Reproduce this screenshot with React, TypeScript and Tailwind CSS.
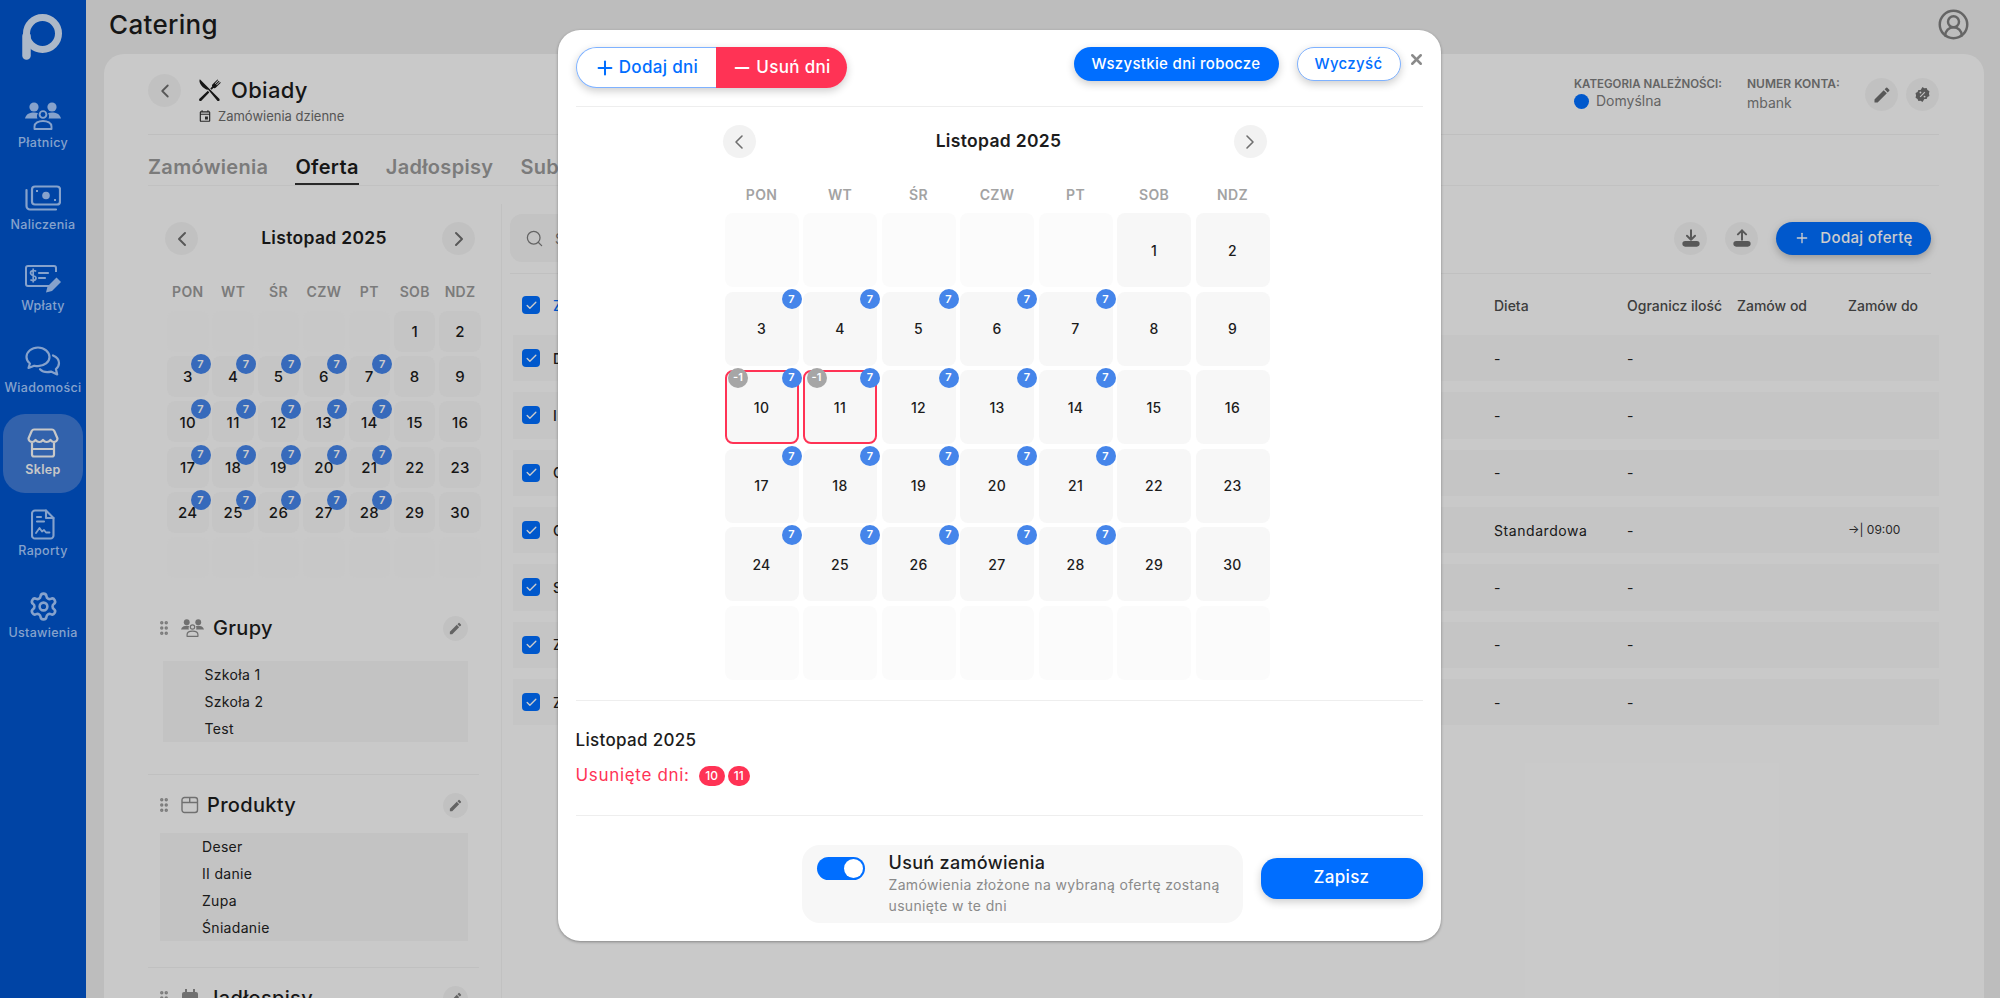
import { ChevronLeft, ChevronRight, CircleUserRound, GripVertical, Minus, Plus, Search, Settings, Check, X } from 'lucide-react';
import { GiKnifeFork } from 'react-icons/gi';
import { MdEdit, MdOutlineEvent } from 'react-icons/md';
import type { ReactNode } from 'react';

function PeopleIcon({ className }: { className?: string }) {
  return (
    <svg viewBox="0 0 36 28" className={className} fill="currentColor">
      <circle cx="9" cy="5" r="4.6" />
      <circle cx="27" cy="5" r="4.6" />
      <path d="M0 16.500C1 12 5 10.500 9 10.500c1.700 0 3 .3 4 .8-1.300 1.500-1.400 3.500-.5 5.200H0Z" />
      <path d="M36 16.500C35 12 31 10.500 27 10.500c-1.700 0-3 .3-4 .8 1.300 1.500 1.400 3.500.5 5.200H36Z" />
      <circle cx="18" cy="12.500" r="3.400" fill="none" stroke="currentColor" strokeWidth="1.900" />
      <path d="M9.500 27v-2.500c0-3.500 4-5.500 8.500-5.500s8.500 2 8.500 5.500V27H9.500Z" fill="none" stroke="currentColor" strokeWidth="1.900" strokeLinejoin="round" />
    </svg>
  );
}

function CashIcon({ className }: { className?: string }) {
  return (
    <svg viewBox="0 0 36 26" className={className} fill="none" stroke="currentColor" strokeWidth="2.200">
      <rect x="7" y="1.500" width="28" height="18" rx="3" />
      <circle cx="21" cy="10.500" r="3.800" fill="currentColor" stroke="none" />
      <path d="M11 6h2M29 15h2" strokeWidth="2" />
      <path d="M1.500 5v16a3.500 3.500 0 0 0 3.500 3.500h26" strokeLinecap="round" />
    </svg>
  );
}

function PaymentIcon({ className }: { className?: string }) {
  return (
    <svg viewBox="0 0 36 28" className={className} fill="none" stroke="currentColor" strokeWidth="2">
      <path d="M27 21H3a2 2 0 0 1-2-2V3a2 2 0 0 1 2-2h26a2 2 0 0 1 2 2v4" />
      <path d="M14 8h9M14 13h6" strokeLinecap="round" strokeWidth="2.200" />
      <path d="M11 6.500C10 5 5.500 5 5.500 8c0 3 5.500 2 5.500 5 0 3-4.500 3-5.500 1.500M8.200 3.500v14" strokeWidth="1.700" />
      <path d="M21 27.500l1.500-6 9-9 4.500 4.500-9 9-6 1.500Z" fill="currentColor" stroke="none" />
    </svg>
  );
}

function ChatIcon({ className }: { className?: string }) {
  return (
    <svg viewBox="0 0 36 30" className={className} fill="none" stroke="currentColor" strokeWidth="2.200" strokeLinejoin="round" strokeLinecap="round">
      <path d="M13 1.500C6.700 1.500 1.500 5.700 1.500 11c0 2.600 1.300 4.900 3.400 6.500L3.500 22l5.700-2.300c1.200.3 2.500.5 3.800.5 6.300 0 11.500-4.200 11.500-9.200S19.300 1.500 13 1.500Z" />
      <path d="M28 9.500c3.700 1.500 6 4.300 6 7.500 0 2.400-1.200 4.500-3.100 6l1.300 5.500-6.200-2.900c-4 1-8.500.1-11-2.400" />
    </svg>
  );
}

function StoreIcon({ className }: { className?: string }) {
  return (
    <svg viewBox="0 0 32 30" className={className} fill="none" stroke="currentColor" strokeWidth="2.200" strokeLinejoin="round">
      <path d="M7 1.500h18c1 0 1.800.6 2.300 1.500l3.200 7.500c0 2-1.800 3.500-3.600 3.500-1.900 0-3.400-2-3.400-2s-1.600 2-3.800 2-3.700-2-3.700-2-1.500 2-3.700 2-3.800-2-3.800-2-1.500 2-3.400 2c-1.800 0-3.600-1.500-3.600-3.500L4.700 3C5.200 2.100 6 1.500 7 1.500Z" />
      <path d="M5 15v11.500a2 2 0 0 0 2 2h18a2 2 0 0 0 2-2V15M5 21h22" />
    </svg>
  );
}

function ReportIcon({ className }: { className?: string }) {
  return (
    <svg viewBox="0 0 24 31" className={className} fill="none" stroke="currentColor" strokeWidth="2.100" strokeLinejoin="round" strokeLinecap="round">
      <path d="M4 1.500h11l7.500 7.500v17.500a3 3 0 0 1-3 3H4a3 3 0 0 1-3-3v-22a3 3 0 0 1 3-3Z" />
      <path d="M15 1.500V9h7.500M6 8h4M6 12.500h7" />
      <path d="M5 24l3.500-5 2.500 3.500 2-1.500 2 2.500h3.500" strokeWidth="1.800" />
    </svg>
  );
}

function LogoIcon({ className }: { className?: string }) {
  return (
    <svg viewBox="0 0 40 46" className={className} fill="none" stroke="currentColor">
      <circle cx="20.500" cy="19.500" r="16" strokeWidth="7" />
      <path d="M4.500 22v19.500" strokeWidth="8.500" strokeLinecap="round" />
    </svg>
  );
}

function BoxIcon({ className }: { className?: string }) {
  return (
    <svg viewBox="0 0 18 18" className={className} fill="none" stroke="currentColor" strokeWidth="1.400">
      <rect x="1" y="1.500" width="15.500" height="15" rx="2.500" />
      <path d="M1 6.500h15.500M8.700 1.500v5" />
    </svg>
  );
}

function CalFilledIcon({ className }: { className?: string }) {
  return (
    <svg viewBox="0 0 18 18" className={className} fill="currentColor">
      <rect x="1" y="3" width="16" height="14" rx="2" />
      <rect x="4" y="0" width="2" height="4" />
      <rect x="12" y="0" width="2" height="4" />
    </svg>
  );
}

function TrayArrowIcon({ up, className }: { up?: boolean; className?: string }) {
  return (
    <svg viewBox="0 0 20 20" className={className} fill="none" stroke="currentColor" strokeWidth="2.200" strokeLinecap="round" strokeLinejoin="round">
      {up ? <path d="M10 12V1.500M5.500 6 10 1.500 14.500 6" /> : <path d="M10 1.500V12M5.500 7.500 10 12l4.500-4.500" />}
      <rect x="1.500" y="14.500" width="17" height="4" rx="2" fill="currentColor" />
    </svg>
  );
}

function DiscountIcon({ className }: { className?: string }) {
  return (
    <svg viewBox="0 0 16 16" className={className}>
      <path fill="currentColor" d="M8 0l2 1.300 2.400-.2.9 2.200 2.100 1.200-.5 2.500.5 2.500-2.100 1.200-.9 2.200-2.400-.2L8 16l-2-1.300-2.400.2-.9-2.200L.6 11.500 1.100 9 .6 6.500l2.100-1.200.9-2.200 2.400.2L8 0Z" />
      <path d="M10.500 5.500l-5 5" stroke="#f4f4f4" strokeWidth="1.200" />
      <circle cx="5.800" cy="5.800" r="1" fill="#f4f4f4" />
      <circle cx="10.200" cy="10.200" r="1" fill="#f4f4f4" />
    </svg>
  );
}

const navItems = [
  { label: 'Płatnicy', icon: <PeopleIcon className="h-[28px] w-[36px]" /> },
  { label: 'Naliczenia', icon: <CashIcon className="h-[26px] w-[36px]" /> },
  { label: 'Wpłaty', icon: <PaymentIcon className="h-[28px] w-[36px]" /> },
  { label: 'Wiadomości', icon: <ChatIcon className="h-[30px] w-[36px]" /> },
  { label: 'Sklep', icon: <StoreIcon className="h-[30px] w-[32px]" />, active: true },
  { label: 'Raporty', icon: <ReportIcon className="h-[31px] w-[24px]" /> },
  { label: 'Ustawienia', icon: <Settings className="h-[31px] w-[31px]" strokeWidth={2} /> },
];

function Sidebar() {
  return (
    <aside className="flex h-full w-[86px] shrink-0 flex-col items-center bg-[#0056cf] pt-[14px] text-[#a8cbff]">
      <LogoIcon className="-ml-[3px] h-[46px] w-[40px] text-[#d8e6fb]" />
      <nav className="mt-[27px] flex flex-col items-center gap-[2.700px]">
        {navItems.map((item) => (
          <div
            key={item.label}
            className={`flex h-[79px] w-[80px] flex-col items-center rounded-[22px] pt-[14px] ${item.active ? 'bg-[#3f7bd8] text-[#fafafa]' : ''}`}
          >
            <div className="flex h-[30px] items-center justify-center">{item.icon}</div>
            <span className={`mt-[4px] text-[12.500px] leading-[16px] whitespace-nowrap ${item.active ? 'font-semibold' : 'font-medium'}`}>{item.label}</span>
          </div>
        ))}
      </nav>
    </aside>
  );
}

const weekDays = ['PON', 'WT', 'ŚR', 'CZW', 'PT', 'SOB', 'NDZ'];
const blanksBefore = [0, 1, 2, 3, 4];
const monthDays = Array.from({ length: 30 }, (_, i) => i + 1);
const blanksAfter = [0, 1, 2, 3, 4, 5, 6];
const hasOffer = (d: number) => d >= 3 && d <= 28 && (d + 4) % 7 < 5;

function SmallCalendar() {
  return (
    <div>
      <div className="ml-[17px] flex w-[310px] items-center justify-between">
        <CircleButton><ChevronLeft size={24} strokeWidth={2} /></CircleButton>
        <span className="ml-[8px] text-[17.500px] font-semibold text-[#1c1c1c]">Listopad 2025</span>
        <CircleButton><ChevronRight size={24} strokeWidth={2} /></CircleButton>
      </div>
      <div className="mt-[27px] ml-[19px] grid grid-cols-[repeat(7,41.500px)] gap-x-[3.900px] text-center text-[14px] leading-[20px] font-semibold text-[#9a9a9a]">
        {weekDays.map((d) => <span key={d}>{d}</span>)}
      </div>
      <div className="mt-[9px] ml-[19px] grid grid-cols-[repeat(7,41.500px)] gap-x-[3.900px] gap-y-[4.200px]">
        {blanksBefore.map((i) => <div key={i} className="h-[41px] rounded-[8px] bg-[#fbfbfb]" />)}
        {monthDays.map((d) => (
          <div key={d} className="relative flex h-[41px] items-center justify-center rounded-[8px] bg-[#f7f7f7] pt-[2px] text-[15px] font-medium text-[#1c1c1c]">
            {d}
            {hasOffer(d) && <Badge className="-top-[2px] -right-[2px]">7</Badge>}
          </div>
        ))}
        {blanksAfter.map((i) => <div key={i} className="h-[41px] rounded-[8px] bg-[#fbfbfb]" />)}
      </div>
    </div>
  );
}

function Badge({ children, className, gray }: { children: ReactNode; className?: string; gray?: boolean }) {
  return (
    <span className={`absolute flex h-[20px] w-[20px] items-center justify-center rounded-full text-[11px] font-semibold tracking-normal text-white ${gray ? 'bg-[#a6a6a6]' : 'bg-[#4585ea]'} ${className ?? ''}`}>
      {children}
    </span>
  );
}

function CircleButton({ children }: { children: ReactNode }) {
  return <div className="flex h-[33px] w-[33px] items-center justify-center rounded-full bg-[#f2f2f2] text-[#6f6f6f]">{children}</div>;
}

function SidePanel({ title, icon, items, listClass, gap }: { title: string; icon: ReactNode; items: string[]; listClass: string; gap: string }) {
  return (
    <section>
      <div className="flex h-[25px] w-[320px] items-center pl-[7px]">
        <GripVertical size={18} strokeWidth={2.600} className="text-[#9a9a9a]" />
        <div className="ml-[8px] flex w-[24px] justify-start text-[#8c8c8c]">{icon}</div>
        <span className={`${gap} text-[20px] font-medium text-[#1c1c1c]`}>{title}</span>
        <div className="ml-auto flex h-[25px] w-[25px] items-center justify-center rounded-full bg-[#f2f2f2] text-[#7d7d7d]">
          <MdEdit size={15} />
        </div>
      </div>
      {items.length > 0 && (
        <ul className={`flex flex-col bg-[#f4f4f4] pl-[42px] text-[14px] leading-[27px] text-[#222] ${listClass}`}>
          {items.map((t) => <li key={t}>{t}</li>)}
        </ul>
      )}
    </section>
  );
}

const offerRows = [
  { letter: 'D', diet: '-' },
  { letter: 'I', diet: '-' },
  { letter: 'C', diet: '-' },
  { letter: 'C', diet: 'Standardowa', until: '09:00' },
  { letter: 'S', diet: '-' },
  { letter: 'Z', diet: '-' },
  { letter: 'Z', diet: '-' },
];

const rowGrid = 'grid grid-cols-[40px_941px_133px_110px_111px_1fr] items-center';

function Checkbox() {
  return (
    <span className="ml-[9px] flex h-[18px] w-[18px] items-center justify-center rounded-[4px] bg-[#006eff] text-white">
      <Check size={13} strokeWidth={2.500} />
    </span>
  );
}

function OfferTable() {
  return (
    <div className="ml-[3px]">
      <div className={`${rowGrid} mt-[8px] h-[46px] text-[14px] font-medium tracking-normal text-[#4d4d4d]`}>
        <Checkbox />
        <span className="text-[#006eff]">Z</span>
        <span>Dieta</span>
        <span className="whitespace-nowrap">Ogranicz ilość</span>
        <span>Zamów od</span>
        <span>Zamów do</span>
      </div>
      <div className="mt-[7px] flex flex-col gap-[11px]">
        {offerRows.map((row, i) => (
          <div key={i} className={`${rowGrid} h-[46.330px] bg-[#f7f7f7] text-[14px] tracking-[0.04em] text-[#222]`}>
            <Checkbox />
            <span className="font-medium">{row.letter}</span>
            <span>{row.diet}</span>
            <span>-</span>
            <span />
            <span className="text-[12px] tracking-normal text-[#333]">{row.until ? `→| ${row.until}` : ''}</span>
          </div>
        ))}
      </div>
    </div>
  );
}

function Page() {
  return (
    <main className="flex h-full min-w-0 flex-1 flex-col">
      <header className="flex h-[54px] shrink-0 items-start justify-between pr-[30px] pl-[23px]">
        <h1 className="mt-[7px] text-[26px] leading-[36px] font-medium text-[#1c1c1c]">Catering</h1>
        <CircleUserRound size={33} strokeWidth={1.800} className="mt-[8px] text-[#7f7f7f]" />
      </header>
      <div className="mr-[16.500px] ml-[17.500px] flex-1 overflow-hidden rounded-t-[20px] bg-[#fcfcfc] pt-[20px] pr-[44.500px] pl-[44.500px]">
        <div className="flex h-[61px] items-start border-b border-[#efefef]">
          <CircleButton><ChevronLeft size={22} strokeWidth={2} /></CircleButton>
          <div className="ml-[17px]">
            <div className="flex items-center gap-[9px] text-[22px] leading-[32px] font-medium text-[#1c1c1c]">
              <GiKnifeFork size={24} />
              Obiady
            </div>
            <div className="mt-[1px] flex items-center gap-[6px] text-[13px] leading-[18px] tracking-normal text-[#6b6b6b]">
              <MdOutlineEvent size={14} className="text-[#333]" />
              Zamówienia dzienne
            </div>
          </div>
          <div className="mt-[2px] ml-auto flex tracking-normal">
            <div className="w-[173px]">
              <div className="text-[11.500px] leading-[16px] font-semibold text-[#7d7d7d]">KATEGORIA NALEŻNOŚCI:</div>
              <div className="flex items-center gap-[7px] text-[14px] leading-[18px] text-[#7d7d7d]">
                <span className="h-[15px] w-[15px] rounded-full bg-[#006eff]" />
                Domyślna
              </div>
            </div>
            <div className="w-[118px]">
              <div className="text-[12px] leading-[16px] font-semibold text-[#7d7d7d]">NUMER KONTA:</div>
              <div className="mt-[2px] text-[14px] leading-[18px] text-[#7d7d7d]">mbank</div>
            </div>
            <div className="mt-[2px] flex gap-[8px]">
              <CircleButton><MdEdit size={20} /></CircleButton>
              <CircleButton><DiscountIcon className="h-[15px] w-[15px]" /></CircleButton>
            </div>
          </div>
        </div>
        <div className="flex h-[51px] items-end gap-[27px] border-b border-[#f2f2f2] text-[20px] font-semibold text-[#9a9a9a]">
          <span className="pb-[2px] leading-[32px]">Zamówienia</span>
          <span className="border-b-2 border-[#333] leading-[32px] text-[#1c1c1c]">Oferta</span>
          <span className="pb-[2px] leading-[32px]">Jadłospisy</span>
          <span className="pb-[2px] leading-[32px]">Subskrypcje</span>
        </div>
        <div className="mt-[18px] flex">
          <div className="w-[354px] shrink-0 border-r border-[#f2f2f2] pt-[18px]">
            <SmallCalendar />
            <div className="mt-[38px]">
              <SidePanel title="Grupy" icon={<PeopleIcon className="h-[18px] w-[23px]" />} gap="ml-[8px]" listClass="mt-[20px] ml-[14.500px] mr-[33px]" items={['Szkoła 1', 'Szkoła 2', 'Test']} />
            </div>
            <div className="mt-[32px] mr-[22px] border-t border-[#f0f0f0]" />
            <div className="mt-[18px]">
              <SidePanel title="Produkty" icon={<BoxIcon className="h-[18px] w-[18px]" />} gap="ml-[2px]" listClass="mt-[15px] ml-[12px] mr-[33px]" items={['Deser', 'II danie', 'Zupa', 'Śniadanie']} />
            </div>
            <div className="mt-[26px] mr-[22px] border-t border-[#f0f0f0]" />
            <div className="mt-[18px]">
              <SidePanel title="Jadłospisy" icon={<CalFilledIcon className="h-[18px] w-[18px]" />} gap="ml-[2px]" listClass="" items={[]} />
            </div>
          </div>
          <div className="min-w-0 flex-1 pt-[10px] pl-[8px]">
            <div className="flex h-[48px] items-center pr-[8px]">
              <div className="flex h-[48px] w-[300px] items-center rounded-[12px] bg-[#f4f4f4] pl-[15px] text-[#7d7d7d]">
                <Search size={19} strokeWidth={1.600} />
                <span className="ml-[11px] text-[14px]">S</span>
              </div>
              <div className="ml-auto flex items-center gap-[18px]">
                <CircleButton><TrayArrowIcon className="h-[18px] w-[18px]" /></CircleButton>
                <CircleButton><TrayArrowIcon up className="h-[18px] w-[18px]" /></CircleButton>
                <div className="flex h-[33px] w-[155px] items-center justify-center gap-[10px] rounded-full bg-[#006eff] text-[15px] font-medium text-white shadow-[0_3px_8px_rgba(0,0,0,0.25)]">
                  <Plus size={16} strokeWidth={2} />
                  Dodaj ofertę
                </div>
              </div>
            </div>
            <div className="mt-[11px] mr-[8px] border-t border-[#f0f0f0]" />
            <OfferTable />
          </div>
        </div>
      </div>
    </main>
  );
}

function ModalCell({ day }: { day: number }) {
  const removed = day === 10 || day === 11;
  return (
    <div className={`relative flex h-[74px] items-center justify-center rounded-[8px] bg-[#f7f7f7] text-[14px] font-medium text-[#1c1c1c] ${removed ? 'border-2 border-[#ff3355]' : ''}`}>
      {day}
      {hasOffer(day) && <Badge className={removed ? '-top-[4.300px] -right-[5px]' : '-top-[2.300px] -right-[3px]'}>7</Badge>}
      {removed && <Badge gray className="-top-[4.300px] left-[1.500px] text-[9px]">-1</Badge>}
    </div>
  );
}

function RemoveDaysModal() {
  return (
    <div className="relative flex h-[911px] w-[883px] flex-col rounded-[22px] bg-white px-[18px] pt-[17px] shadow-[0_1px_3px_rgba(0,0,0,0.35)]">
      <div className="flex items-start">
        <div className="flex h-[41px] rounded-full text-[17px] font-medium shadow-[0_3px_8px_rgba(0,0,0,0.2)]">
          <div className="flex w-[140px] items-center justify-center gap-[3px] rounded-l-full border border-r-0 border-[#7fb2ff] bg-white text-[#006eff]">
            <Plus size={22} strokeWidth={2.200} />
            Dodaj dni
          </div>
          <div className="flex w-[131px] items-center justify-center gap-[3px] rounded-r-full bg-[#ff3355] text-white">
            <Minus size={22} strokeWidth={2.200} />
            Usuń dni
          </div>
        </div>
        <div className="ml-auto flex items-start gap-[18px] pr-[22px] text-[15px] font-medium">
          <div className="flex h-[34px] w-[205px] items-center justify-center rounded-full bg-[#006eff] text-white shadow-[0_3px_8px_rgba(0,0,0,0.2)]">Wszystkie dni robocze</div>
          <div className="flex h-[34px] w-[104px] items-center justify-center rounded-full border border-[#7fb2ff] bg-white text-[#006eff] shadow-[0_3px_8px_rgba(0,0,0,0.2)]">Wyczyść</div>
        </div>
        <X size={17} strokeWidth={3.500} className="absolute top-[21px] right-[16px] text-[#8a8a8a]" />
      </div>
      <div className="mt-[18px] border-t border-[#eeeeee]" />
      <div className="mt-[18px] ml-[147px] flex w-[544px] items-center justify-between">
        <CircleButton><ChevronLeft size={24} strokeWidth={1.600} /></CircleButton>
        <span className="ml-[8px] text-[17.500px] font-semibold text-[#1c1c1c]">Listopad 2025</span>
        <CircleButton><ChevronRight size={24} strokeWidth={1.600} /></CircleButton>
      </div>
      <div className="mt-[27px] ml-[149px] grid grid-cols-[repeat(7,74px)] gap-x-[4.500px] text-center text-[14px] leading-[20px] font-semibold text-[#a3a3a3]">
        {weekDays.map((d) => <span key={d}>{d}</span>)}
      </div>
      <div className="mt-[8px] ml-[149px] grid grid-cols-[repeat(7,74px)] gap-[4.500px]">
        {blanksBefore.map((i) => <div key={i} className="h-[74px] rounded-[8px] bg-[#fbfbfb]" />)}
        {monthDays.map((d) => <ModalCell key={d} day={d} />)}
        {blanksAfter.map((i) => <div key={i} className="h-[74px] rounded-[8px] bg-[#fbfbfb]" />)}
      </div>
      <div className="mt-[20px] border-t border-[#eeeeee]" />
      <div className="mt-[27px] text-[17px] leading-[24px] font-medium text-[#1c1c1c]">Listopad 2025</div>
      <div className="mt-[14px] flex h-[20px] items-center text-[17px] tracking-[0.04em] text-[#ff3355]">
        Usunięte dni:
        <span className="ml-[9px] flex h-[20px] w-[26px] items-center justify-center rounded-full bg-[#ff3355] text-[12px] font-medium tracking-normal text-white">10</span>
        <span className="ml-[3px] flex h-[20px] w-[22px] items-center justify-center rounded-full bg-[#ff3355] text-[12px] font-medium tracking-normal text-white">11</span>
      </div>
      <div className="mt-[29px] border-t border-[#eeeeee]" />
      <div className="mt-[29px] flex items-start justify-end gap-[18px]">
        <div className="flex h-[78px] w-[441px] items-start rounded-[18px] bg-[#f7f7f7] pt-[7px] pl-[15px]">
          <div className="mt-[5px] flex h-[23px] w-[48px] shrink-0 items-center justify-end rounded-full bg-[#006eff] pr-[2px]">
            <span className="h-[19px] w-[19px] rounded-full bg-white" />
          </div>
          <div className="ml-[24px]">
            <div className="text-[18px] leading-[22px] font-medium text-[#1c1c1c]">Usuń zamówienia</div>
            <p className="text-[14px] leading-[21px] tracking-[0.025em] text-[#8a8a8a]">Zamówienia złożone na wybraną ofertę zostaną<br />usunięte w te dni</p>
          </div>
        </div>
        <div className="mt-[13px] flex h-[41px] w-[162px] items-center justify-center rounded-[16px] bg-[#006eff] text-[17px] font-medium text-white shadow-[0_3px_8px_rgba(0,0,0,0.2)]">Zapisz</div>
      </div>
    </div>
  );
}

export default function App() {
  return (
    <div className="relative flex h-[998px] w-full overflow-hidden bg-[#ededed] font-[Inter,sans-serif] tracking-[0.02em]">
      <Sidebar />
      <Page />
      <div className="absolute inset-0 flex items-start justify-center bg-black/20 pt-[30px] pr-[2px]">
        <RemoveDaysModal />
      </div>
    </div>
  );
}
